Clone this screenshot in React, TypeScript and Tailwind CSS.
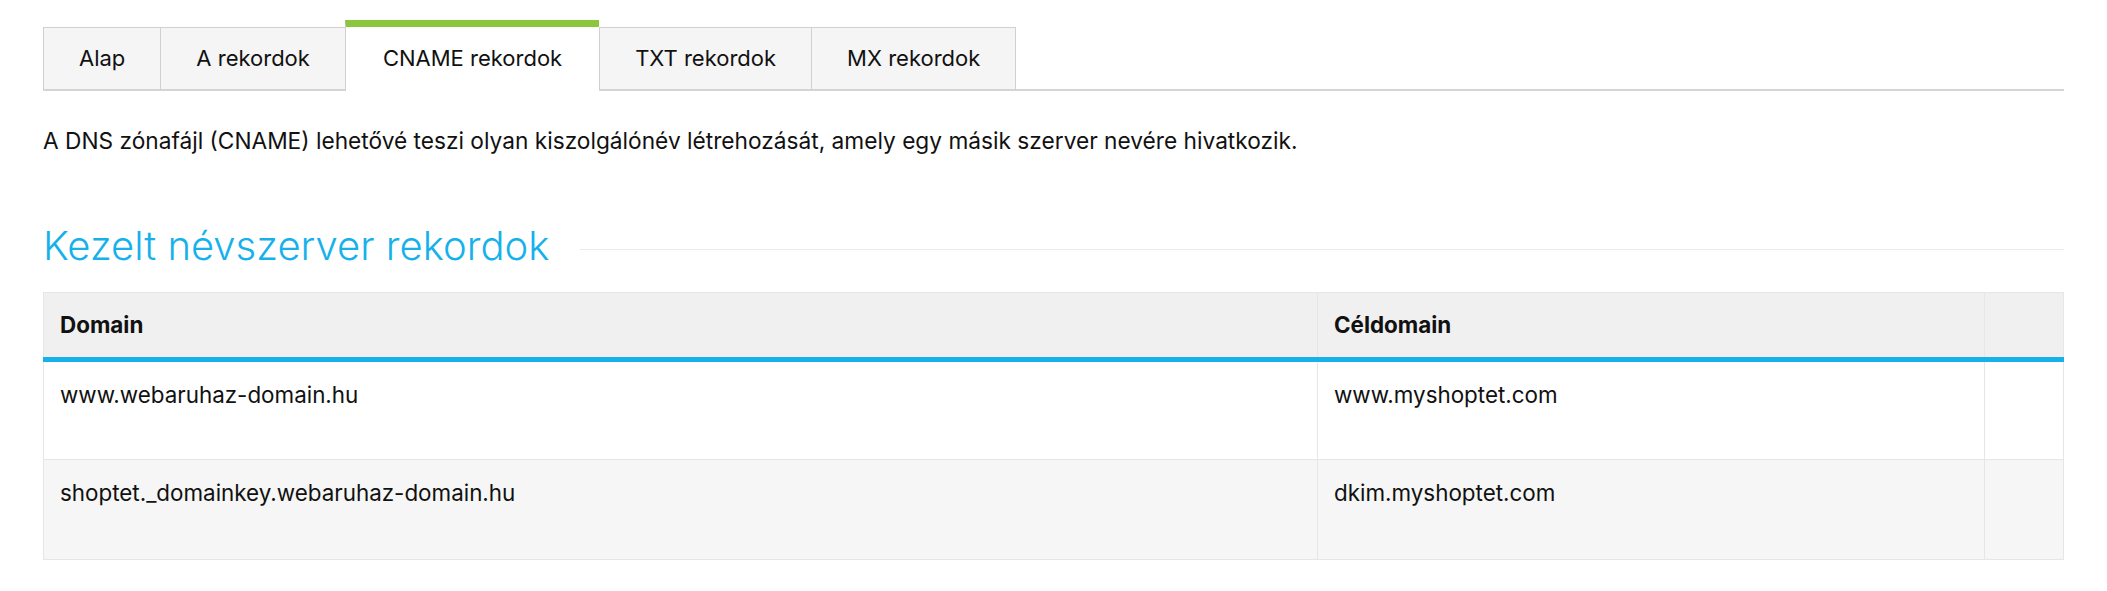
import React from "react";

const tabs = ["Alap", "A rekordok", "CNAME rekordok", "TXT rekordok", "MX rekordok"];
const activeTab = 2;

const records = [
  { domain: "www.webaruhaz-domain.hu", target: "www.myshoptet.com" },
  { domain: "shoptet._domainkey.webaruhaz-domain.hu", target: "dkim.myshoptet.com" },
];

export default function App() {
  return (
    <div className="min-h-screen bg-white px-[43px] pt-[20px] font-['Inter','Noto_Sans',sans-serif] text-[#111]">
      <div id="dns-tabs" className="flex items-end border-b-2 border-[#d4d4d4]">
        {tabs.map((label, i) =>
          i === activeTab ? (
            <div
              key={label}
              className="-mb-[2px] flex h-[71px] items-center border-l border-t-[7px] border-l-[#d0d0d0] border-t-[#8cc63f] bg-white px-[37px] pb-[2px] text-[22px]"
            >
              {label}
            </div>
          ) : (
            <div
              key={label}
              className={`flex h-[62px] items-center border-l border-t border-[#d0d0d0] bg-[#f5f5f5] px-[35px] text-[22px] ${
                i === tabs.length - 1 ? "border-r" : ""
              }`}
            >
              {label}
            </div>
          )
        )}
      </div>

      <p className="mt-[35px] text-[22.7px] leading-[30px]">
        A DNS zónafájl (CNAME) lehetővé teszi olyan kiszolgálónév létrehozását, amely egy másik szerver nevére hivatkozik.
      </p>

      <div className="mt-[66px] flex items-center gap-[31px]">
        <h2 className="text-[40px] font-light leading-[48px] text-[#16b1eb]">Kezelt névszerver rekordok</h2>
        <div className="mt-[6px] h-px flex-1 bg-[#ebebeb]" />
      </div>

      <table className="mt-[22px] w-full border-collapse border border-[#e6e6e6] text-[22.4px]">
        <thead>
          <tr className="h-[67px] border-b-[5px] border-b-[#16b1eb] bg-[#f0f0f0]">
            <th className="w-[1274px] px-4 text-left font-bold">Domain</th>
            <th className="w-[667px] border-l border-[#e6e6e6] px-4 text-left font-bold">Céldomain</th>
            <th className="border-l border-[#e6e6e6]" />
          </tr>
        </thead>
        <tbody>
          {records.map((r, i) => (
            <tr key={r.domain} className={`h-[100px] border-t border-[#e6e6e6] ${i % 2 ? "bg-[#f6f6f6]" : "bg-white"}`}>
              <td className="px-4 pt-[18px] align-top leading-[30px]">{r.domain}</td>
              <td className="border-l border-[#e6e6e6] px-4 pt-[18px] align-top leading-[30px]">{r.target}</td>
              <td className="border-l border-[#e6e6e6]" />
            </tr>
          ))}
        </tbody>
      </table>
    </div>
  );
}
